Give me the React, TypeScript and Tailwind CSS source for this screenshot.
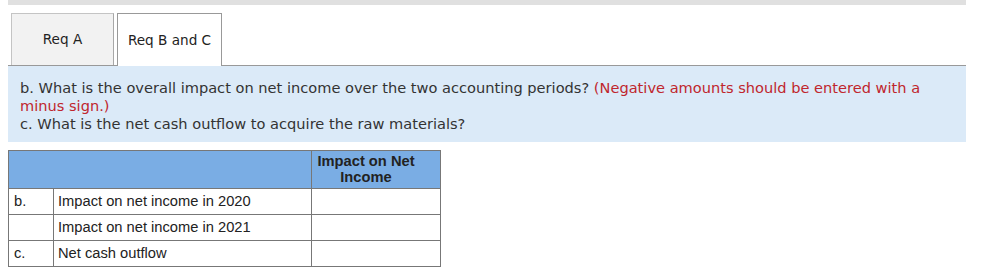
export default function App() {
  const rows = [
    { tag: 'b.', label: 'Impact on net income in 2020' },
    { tag: '', label: 'Impact on net income in 2021' },
    { tag: 'c.', label: 'Net cash outflow' },
  ];

  return (
    <div className="h-[277px] w-[986px] overflow-hidden bg-white">
      <div className="ml-2 w-[958px]">
        <div className="h-[5px] bg-[#e0e0e0]" />

        {/* tabs */}
        <div className="mt-2 flex items-end gap-[3px] border-b border-[#999999] pl-[3px] font-['DejaVu_Sans',Verdana,sans-serif] text-[13.6px] text-[#222]">
          <div className="flex h-[52px] w-[103px] items-center justify-center border border-b-0 border-[#c4c4c4] border-r-[#a8a8a8] bg-[#f2f2f2]">
            Req A
          </div>
          <div className="-mb-px flex h-[53px] w-[105px] items-center justify-center border border-b-0 border-[#999999] bg-white">
            Req B and C
          </div>
        </div>

        {/* question panel */}
        <div className="bg-[#dbeaf8] px-3 pb-[9px] pt-[13px] font-['DejaVu_Sans',Verdana,sans-serif] text-[14.6px] leading-[18px] text-[#333]">
          <p>
            b. What is the overall impact on net income over the two accounting periods?{' '}
            <span className="text-[#c0262d]">(Negative amounts should be entered with a minus sign.)</span>
          </p>
          <p>c. What is the net cash outflow to acquire the raw materials?</p>
        </div>

        {/* answer table */}
        <table className="mt-2 w-[432px] table-fixed border-collapse font-['Liberation_Sans',Arial,sans-serif] text-[14.7px] text-[#222]">
          <colgroup>
            <col className="w-[45px]" />
            <col className="w-[258px]" />
            <col className="w-[129px]" />
          </colgroup>
          <thead>
            <tr className="h-[38px] bg-[#7aade4]">
              <th colSpan={2} className="border border-[#777]" />
              <th className="border border-[#777] pb-[2px] pl-1 pr-[24px] pt-[2px] text-center align-top font-bold leading-[16px]">
                Impact on Net Income
              </th>
            </tr>
          </thead>
          <tbody>
            {rows.map((r, i) => (
              <tr key={i} className="h-[26px]">
                <td className="border border-[#777] px-[5px]">{r.tag}</td>
                <td className="border border-[#777] px-1">{r.label}</td>
                <td className="border border-[#777]" />
              </tr>
            ))}
          </tbody>
        </table>
      </div>
    </div>
  );
}
